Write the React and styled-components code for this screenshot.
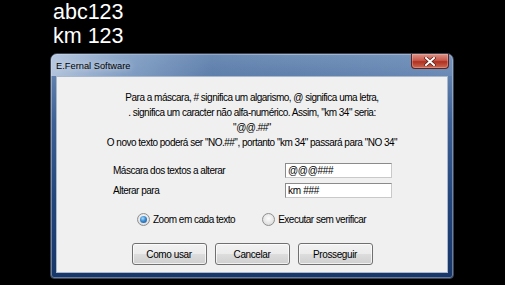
import React, { useState } from "react";
import styled, { createGlobalStyle } from "styled-components";

const GlobalStyle = createGlobalStyle`
  html, body {
    margin: 0;
    padding: 0;
    background: #000;
    width: 505px;
    height: 285px;
    overflow: hidden;
  }
`;

const dialogFont = `"Liberation Sans", Arial, sans-serif`;

// Page
const Page = styled.div`
  display: flex;
  flex-direction: column;
  font-family: "Liberation Sans", Arial, sans-serif;
`;

const Caption = styled.div`
  padding-left: 53px;
  color: #fff;
  font-size: 21.5px;
  line-height: 24px;
`;

// Window chrome
const Window = styled.div`
  margin: 5px 0 0 50px;
  width: 404px;
  height: 226px;
  box-sizing: border-box;
  display: flex;
  flex-direction: column;
  padding: 0 5px 5px 5px;
  border: 1px solid #3b4350;
  border-radius: 7px 7px 4px 4px;
  background: linear-gradient(180deg, #7190b8 0%, #3d6096 30%, #22457c 65%, #173669 100%);
  box-shadow: inset 0 0 0 1px rgba(255, 255, 255, 0.35);
`;

const TitleBar = styled.div`
  height: 22px;
  margin: 0 -5px;
  padding: 0 4px 0 5px;
  display: flex;
  align-items: flex-start;
  justify-content: space-between;
  border-radius: 6px 6px 0 0;
  background: linear-gradient(
    90deg,
    rgba(205, 218, 236, 0.75) 0%,
    rgba(160, 184, 215, 0.55) 18%,
    rgba(90, 122, 168, 0.25) 40%,
    rgba(30, 60, 110, 0) 60%,
    rgba(130, 160, 200, 0.3) 100%
  );
`;

const Title = styled.span`
  margin-top: 5px;
  font-family: "Liberation Sans", Arial, sans-serif;
  font-size: 9.3px;
  line-height: 14px;
  color: #000;
  text-shadow: 0 0 6px rgba(255, 255, 255, 0.8);
`;

const CloseButton = styled.button`
  width: 38px;
  height: 15px;
  padding: 0;
  display: flex;
  align-items: center;
  justify-content: center;
  border: 1px solid #5a2320;
  border-top: none;
  border-radius: 0 0 4px 4px;
  background: linear-gradient(180deg, #dc9489 0%, #c8594c 45%, #b0301f 55%, #c96a55 100%);
  box-shadow: inset 0 0 0 1px rgba(255, 200, 190, 0.35);
`;

const Client = styled.div`
  flex: 1;
  display: flex;
  flex-direction: column;
  align-items: center;
  background: #f0f0f0;
  border: 1px solid #aab8cc;
  font-family: ${dialogFont};
  font-size: 10px;
  letter-spacing: -0.5px;
  white-space: nowrap;
  color: #000;
`;

// Content
const Explain = styled.div`
  margin-top: 13px;
  text-align: center;
  line-height: 15px;
`;

const Form = styled.div`
  margin-top: 13px;
  align-self: stretch;
  padding-left: 56px;
  display: grid;
  grid-template-columns: 172px 107px;
  row-gap: 5px;
  align-items: center;
`;

const Label = styled.span``;

const Input = styled.input`
  width: 107px;
  height: 15px;
  box-sizing: border-box;
  padding: 0 2px;
  border: 1px solid #8b8b8b;
  border-right-color: #c9c9c9;
  border-bottom-color: #c9c9c9;
  background: #fff;
  font-family: ${dialogFont};
  font-size: 10px;
  letter-spacing: -0.3px;
  color: #000;
  outline: none;
`;

const RadioRow = styled.div`
  margin-top: 15px;
  align-self: stretch;
  padding-left: 80px;
  display: flex;
  align-items: center;
  gap: 27px;
`;

const RadioLabel = styled.label`
  display: flex;
  align-items: center;
  gap: 3px;
  cursor: default;
`;

const RadioDot = styled.span`
  width: 13px;
  height: 13px;
  box-sizing: border-box;
  border-radius: 50%;
  border: 1px solid #8f8f8f;
  background: radial-gradient(circle at 50% 40%, #fdfdfd 0%, #e4e4e4 60%, #cfcfcf 100%);
  display: flex;
  align-items: center;
  justify-content: center;

  &::after {
    content: "";
    width: 7px;
    height: 7px;
    border-radius: 50%;
    display: ${(props) => (props.checked ? "block" : "none")};
    background: radial-gradient(circle at 40% 35%, #a9dcfb 0%, #3a8ad0 45%, #174f8e 100%);
  }
`;

const ButtonRow = styled.div`
  margin-top: 17px;
  display: flex;
  gap: 8px;
`;

const Button = styled.button`
  width: 75px;
  height: 22px;
  padding: 0;
  border: 1px solid #707070;
  border-radius: 3px;
  background: linear-gradient(180deg, #f2f2f2 0%, #ebebeb 50%, #dddddd 51%, #cfcfcf 100%);
  box-shadow: inset 0 0 0 1px rgba(255, 255, 255, 0.7);
  font-family: ${dialogFont};
  font-size: 10px;
  letter-spacing: -0.4px;
  color: #000;
`;

const CloseIcon = () => (
  <svg width="12" height="9" viewBox="0 0 12 9">
    <path d="M2 1 L10 8 M10 1 L2 8" stroke="#5a1a14" strokeWidth="3.4" strokeLinecap="square" />
    <path d="M2 1 L10 8 M10 1 L2 8" stroke="#fff" strokeWidth="2" strokeLinecap="square" />
  </svg>
);

const App = () => {
  const [mode, setMode] = useState("zoom");

  return (
    <Page>
      <GlobalStyle />
      <Caption>
        abc123
        <br />
        km 123
      </Caption>
      <Window>
        <TitleBar>
          <Title>E.Fernal Software</Title>
          <CloseButton>
            <CloseIcon />
          </CloseButton>
        </TitleBar>
        <Client>
          <Explain>
            Para a máscara, # significa um algarismo, @ significa uma letra,
            <br />. significa um caracter não alfa-numérico. Assim, "km 34" seria:
            <br />
            "@@.##"
            <br />O novo texto poderá ser "NO.##", portanto "km 34" passará para "NO 34"
          </Explain>
          <Form>
            <Label>Máscara dos textos a alterar</Label>
            <Input defaultValue="@@@###" />
            <Label>Alterar para</Label>
            <Input defaultValue="km ###" />
          </Form>
          <RadioRow>
            <RadioLabel onClick={() => setMode("zoom")}>
              <RadioDot checked={mode === "zoom"} />
              Zoom em cada texto
            </RadioLabel>
            <RadioLabel onClick={() => setMode("run")}>
              <RadioDot checked={mode === "run"} />
              Executar sem verificar
            </RadioLabel>
          </RadioRow>
          <ButtonRow>
            <Button>Como usar</Button>
            <Button>Cancelar</Button>
            <Button>Prosseguir</Button>
          </ButtonRow>
        </Client>
      </Window>
    </Page>
  );
};

export default App;
